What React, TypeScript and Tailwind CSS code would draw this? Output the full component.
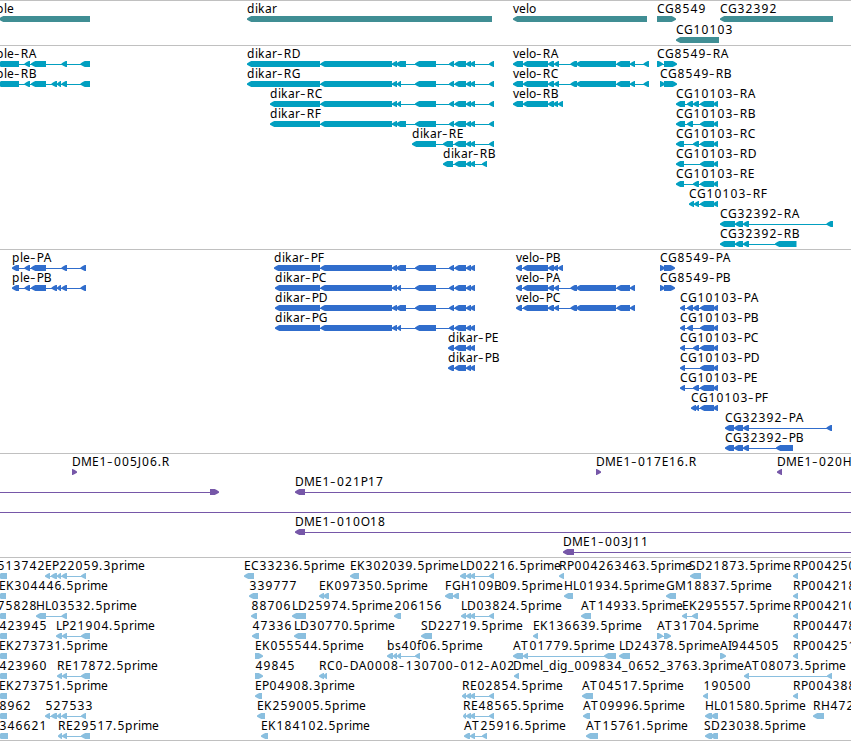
import React from 'react';

type Span = [number, number];

interface Feature {
  x: number;
  label?: string;
  spans: Span[];
  dir?: 'left' | 'right';
  // overrides for the connecting line when it runs past the spans
  line?: Span;
}

interface TrackData {
  name: string;
  color: string;
  rowClass: string;
  padClass: string;
  rows: Feature[][];
}

// pixel advance of every glyph used in the labels
const ADVANCE: Record<string, number> = {
  A: 8, B: 7, C: 8, D: 9, E: 7, F: 7, G: 9, H: 9, I: 3, J: 4, K: 8, L: 6, M: 11, O: 9, P: 7, R: 8, S: 7, T: 8,
  a: 7, b: 8, d: 8, e: 7, f: 4, g: 8, i: 3, k: 7, l: 3, m: 11, o: 7, p: 8, r: 5, s: 6, v: 6,
  '-': 6.7, '.': 4, _: 6,
};

const glyphPositions = (label: string) => {
  let x = 0;
  return label.split('').map((ch) => {
    const at = x;
    x += ADVANCE[ch] ?? 8;
    return /[0-9]/.test(ch) ? at + 0.4 : at;
  });
};

const f = (x: number, label: string, spans: Span[], dir: 'left' | 'right' = 'left'): Feature => ({ x, label, spans, dir });

const DIKAR_END: Span[] = [[454.5, 466], [466, 471], [470, 475]];
const DIKAR_TAIL: Span[] = [[415, 436], [449, 454], ...DIKAR_END];
const DIKAR_LONG: Span[] = [[320.5, 392], [392, 397], [396, 406], ...DIKAR_TAIL];
const DIKAR_SHORT: Span[] = [[320.5, 392], [392, 397], [397, 401], ...DIKAR_TAIL];
const VELO_MID: Span[] = [[523, 548], [548, 554], [554, 559], [570.5, 577], [576, 616], [616.5, 630], [630, 635]];
const VELO_B: Span[] = [[523, 548], [548, 554], [553, 558], [558, 563]];
const CG_END: Span[] = [[700, 714], [713, 718]];
const EST_PLE: Span[] = [[45, 50], [51, 57], [57, 61], [61.5, 67], [81, 86]];
const estDikar = (x: number): Span[] => [[x, 466], [466, 471], [470, 475], [489, 494]];

const TRACKS: TrackData[] = [
  {
    name: 'genes',
    color: '#408e94',
    rowClass: 'relative h-[21px]',
    padClass: 'pb-0',
    rows: [
      [
        f(-4, 'ple', [[-1, 90]]),
        f(247, 'dikar', [[247, 492]]),
        f(513, 'velo', [[513, 647]]),
        f(657, 'CG8549', [[657, 676]], 'right'),
        f(720, 'CG32392', [[720, 833]]),
      ],
      [f(676, 'CG10103', [[676, 719]])],
    ],
  },
  {
    name: 'transcripts',
    color: '#029fc0',
    rowClass: 'relative h-5',
    padClass: 'pb-px',
    rows: [
      [
        f(-4, 'ple-RA', [[-3, 19], [24.5, 30], [31, 46], [61.5, 67], [80.5, 90]]),
        f(247, 'dikar-RD', [[247, 320], ...DIKAR_LONG, [489, 494]]),
        f(513, 'velo-RA', [[513, 523], ...VELO_MID, [643.5, 649]]),
        f(657, 'CG8549-RA', [[657, 663], [664, 677]], 'right'),
      ],
      [
        f(-4, 'ple-RB', [[-3, 19], [24.5, 30], [31, 46], [51.5, 57], [57, 61], [61.5, 67], [80.5, 90]]),
        f(247, 'dikar-RG', [[247, 320], ...DIKAR_SHORT, [489, 494]]),
        f(513, 'velo-RC', [[513, 523], ...VELO_MID, [643.5, 649]]),
        f(660, 'CG8549-RB', [[660, 665], [664, 677]], 'right'),
      ],
      [
        f(270, 'dikar-RC', [[270, 320], ...DIKAR_SHORT, [489, 494]]),
        f(513, 'velo-RB', [[513, 523], ...VELO_B]),
        f(676, 'CG10103-RA', [[676, 685], [687, 693], [693, 699], ...CG_END]),
      ],
      [
        f(270, 'dikar-RF', [[270, 320], ...DIKAR_LONG, [489, 494]]),
        f(676, 'CG10103-RB', [[676, 685], [687, 693], ...CG_END]),
      ],
      [
        f(412, 'dikar-RE', [[412, 436], [443, 453], ...DIKAR_END, [489, 494]]),
        f(676, 'CG10103-RC', [[676, 684], [693, 699], ...CG_END]),
      ],
      [
        f(443, 'dikar-RB', [[443, 453], ...DIKAR_END, [482, 487]]),
        f(676, 'CG10103-RD', [[676, 684], ...CG_END]),
      ],
      [f(676, 'CG10103-RE', [[676, 684], [693, 699], ...CG_END])],
      [f(689, 'CG10103-RF', [[689, 694], [694, 699], ...CG_END])],
      [f(720, 'CG32392-RA', [[720, 735], [735, 743], [743, 749], [826.5, 833]])],
      [f(720, 'CG32392-RB', [[720, 735], [735, 743], [743, 749], [775, 796.5]])],
    ],
  },
  {
    name: 'proteins',
    color: '#306dcc',
    rowClass: 'relative h-5',
    padClass: 'pb-px',
    rows: [
      [
        f(12, 'ple-PA', [[12, 19], [24.5, 30], [31, 46], [61.5, 67], [80.5, 86]]),
        f(274, 'dikar-PF', [[274, 320], ...DIKAR_LONG]),
        f(516, 'velo-PB', [[516, 522], ...VELO_B]),
        f(660, 'CG8549-PA', [[660, 665], [664, 675]], 'right'),
      ],
      [
        f(12, 'ple-PB', [[12, 19], [24.5, 30], [31, 46], [51.5, 57], [57, 61], [61.5, 67], [80.5, 86]]),
        f(275, 'dikar-PC', [[275, 320], ...DIKAR_SHORT]),
        f(516, 'velo-PA', [[516, 522], ...VELO_MID]),
        f(660, 'CG8549-PB', [[660, 665], [664, 675]], 'right'),
      ],
      [
        f(275, 'dikar-PD', [[275, 320], ...DIKAR_LONG]),
        f(516, 'velo-PC', [[516, 522], ...VELO_MID]),
        f(680, 'CG10103-PA', [[680, 685], [687, 693], [693, 699], ...CG_END]),
      ],
      [
        f(275, 'dikar-PG', [[275, 320], ...DIKAR_SHORT]),
        f(680, 'CG10103-PB', [[680, 685], [687, 693], ...CG_END]),
      ],
      [
        f(448, 'dikar-PE', [[448, 454], ...DIKAR_END]),
        f(680, 'CG10103-PC', [[680, 685], [693, 699], ...CG_END]),
      ],
      [
        f(448, 'dikar-PB', [[448, 454], ...DIKAR_END]),
        f(680, 'CG10103-PD', [[680, 685], ...CG_END]),
      ],
      [f(680, 'CG10103-PE', [[680, 685], [693, 699], ...CG_END])],
      [f(691, 'CG10103-PF', [[691, 696], [695, 699], ...CG_END])],
      [f(725, 'CG32392-PA', [[725, 734], [734, 743], [743, 749], [826.5, 832]])],
      [f(725, 'CG32392-PB', [[725, 734], [734, 743], [743, 749], [776, 793]])],
    ],
  },
  {
    name: 'bacs',
    color: '#7657a8',
    rowClass: 'relative h-5',
    padClass: 'pb-px',
    rows: [
      [
        f(72, 'DME1-005J06.R', [[72, 77]], 'right'),
        f(596, 'DME1-017E16.R', [[596, 601]], 'right'),
        f(777, 'DME1-020H', [[777, 782]]),
      ],
      [
        { x: 0, spans: [[210, 219]], dir: 'right', line: [0, 215] },
        { x: 295, label: 'DME1-021P17', spans: [[295, 305]], line: [300, 851] },
      ],
      [{ x: 0, spans: [], line: [0, 851] }],
      [{ x: 295, label: 'DME1-010O18', spans: [[295, 305]], line: [300, 851] }],
      [{ x: 563, label: 'DME1-003J11', spans: [[563, 574]], line: [568, 851] }],
    ],
  },
  {
    name: 'ests',
    color: '#8abfdf',
    rowClass: 'relative h-5',
    padClass: 'pb-0',
    rows: [
      [
        f(-3, '513742', [[-3, 7]]),
        f(45, 'EP22059.3prime', EST_PLE),
        f(244, 'EC33236.5prime', [[244, 254]]),
        f(350, 'EK302039.5prime', [[350, 359]]),
        f(460, 'LD02216.5prime', estDikar(460)),
        f(559, 'RP004263463.5prime', [[559, 564]]),
        f(689, 'SD21873.5prime', [[690, 701]]),
        f(793, 'RP004250', [[793, 798]]),
      ],
      [
        f(-1, 'EK304446.5prime', [[-3, 6]]),
        f(249, '339777', [[249, 258]]),
        f(319, 'EK097350.5prime', [[319, 324], [323, 329]]),
        f(445, 'FGH109B09.5prime', [[445, 453], [453, 459]]),
        f(564, 'HL01934.5prime', [[564, 573]]),
        f(666, 'GM18837.5prime', [[666, 676]]),
        f(793, 'RP004218', [[793, 798]]),
      ],
      [
        f(-3, '75828', [[-3, 6]]),
        f(36, 'HL03532.5prime', [[36, 46], [61.5, 67]]),
        f(251, '88706', [[251, 257]]),
        f(292, 'LD25974.5prime', [[292, 306]]),
        f(394, '206156', [[394, 401]]),
        f(461, 'LD03824.5prime', estDikar(461)),
        f(581, 'AT14933.5prime', [[581, 591]]),
        f(682, 'EK295557.5prime', [[682, 687], [692, 698]]),
        f(793, 'RP004210', [[793, 798]]),
      ],
      [
        f(-1, '423945', [[-3, 7]]),
        f(56, 'LP21904.5prime', [[56, 62], [62, 67], [81, 90]]),
        f(252, '47336', [[252, 259]]),
        f(294, 'LD30770.5prime', [[294, 306]]),
        f(421, 'SD22719.5prime', [[421, 432]]),
        f(533, 'EK136639.5prime', [[533, 538]]),
        f(657, 'AT31704.5prime', [[657, 663], [664, 671]], 'right'),
        f(793, 'RP004478', [[793, 798]]),
      ],
      [
        f(-1, 'EK273731.5prime', [[-3, 7]]),
        f(255, 'EK055544.5prime', [[255, 263]], 'right'),
        f(387, 'bs40f06.5prime', [[387, 393], [393, 397], [397, 401], [415, 420]]),
        f(513, 'AT01779.5prime', [[513, 523], [523, 528], [604, 616]]),
        f(619, 'LD24378.5prime', [[619, 630]]),
        f(720, 'AI944505', [[720, 726]], 'right'),
        f(793, 'RP004251', [[793, 798]]),
      ],
      [
        f(-1, '423960', [[-3, 7]]),
        f(57, 'RE17872.5prime', [[57, 62], [62, 67], [81, 90]]),
        f(255, '49845', [[255, 263]], 'right'),
        f(319, 'RC0-DA0008-130700-012-A02', [[319, 324], [323, 327]]),
        f(513, 'Dmel_dig_009834_0652_3763.3prime', [[514, 519]]),
        f(744, 'AT08073.5prime', [[744, 749], [827, 832]]),
      ],
      [
        f(-1, 'EK273751.5prime', [[-3, 7]]),
        f(255, 'EP04908.3prime', [[255, 262]]),
        f(462, 'RE02854.5prime', estDikar(462)),
        f(582, 'AT04517.5prime', [[582, 593]]),
        f(703, '190500', [[703, 708]]),
        f(793, 'RP004388', [[793, 798]]),
      ],
      [
        f(-1, '8962', [[-3, 7]]),
        f(45, '527533', EST_PLE),
        f(257, 'EK259005.5prime', [[257, 265]]),
        f(463, 'RE48565.5prime', estDikar(463)),
        f(583, 'AT09996.5prime', [[583, 590]]),
        f(705, 'HL01580.5prime', [[705, 712], [711, 718]]),
        f(813, 'RH472', [[813, 824]]),
      ],
      [
        f(-1, '346621', [[-3, 8]]),
        f(58, 'RE29517.5prime', [[58, 62], [62, 67], [81, 90]]),
        f(261, 'EK184102.5prime', [[261, 268]]),
        f(464, 'AT25916.5prime', [[464, 470], [470, 475], [482, 487]]),
        f(586, 'AT15761.5prime', [[586, 598]]),
        f(704, 'SD23038.5prime', [[705, 712], [710, 718]]),
      ],
    ],
  },
];

// bar with a rounded-off tip, 6px tall
const arrowPoints = ([start, end]: Span, dir: 'left' | 'right') => {
  const tip = Math.min(5, end - start);
  const at = (d: number) => (dir === 'left' ? start + d : end - d);
  const back = dir === 'left' ? end : start;
  return [
    [at(0), 15.5],
    [at(tip * 0.45), 14],
    [at(tip * 0.85), 13],
    [back, 13],
    [back, 19],
    [at(tip * 0.85), 19],
    [at(tip * 0.45), 18],
    [at(0), 16.7],
  ].map((p) => p.join(',')).join(' ');
};

const FeatureGlyph: React.FC<{ feature: Feature; color: string }> = ({ feature, color }) => {
  const { x, label, spans, dir = 'left' } = feature;
  const line: Span | null = feature.line ?? (spans.length > 1 ? [spans[0][0] + 2, spans[spans.length - 1][1] - 1] : null);
  return (
    <svg className="absolute top-0 h-5 w-px overflow-visible" style={{ left: x }}>
      {line && <rect x={line[0] - x} y={16} width={line[1] - line[0]} height={1} fill={color} />}
      {spans.map((s, i) => (
        <polygon key={i} points={arrowPoints([s[0] - x, s[1] - x], dir)} fill={color} />
      ))}
      {label && (
        <text
          x={glyphPositions(label).join(' ')}
          y={label.split('').map((ch) => (ch === '-' ? 11 : 10)).join(' ')}
          className="fill-black text-[12px]"
        >
          {label.split(/(-)/).map((part, i) => (
            <tspan key={i} className={part === '-' ? 'text-[17px] font-light' : ''}>{part}</tspan>
          ))}
        </text>
      )}
    </svg>
  );
};

const Track: React.FC<{ track: TrackData }> = ({ track }) => (
  <section className={`border-t border-[#c0c0c0] pt-0.5 ${track.padClass}`}>
    {track.rows.map((row, i) => (
      <div key={i} className={track.rowClass}>
        {row.map((feature, j) => (
          <FeatureGlyph key={j} feature={feature} color={track.color} />
        ))}
      </div>
    ))}
  </section>
);

const App: React.FC = () => (
  <main className="h-[741px] w-[851px] overflow-hidden bg-white font-['Noto_Sans',sans-serif]">
    {TRACKS.map((track) => (
      <Track key={track.name} track={track} />
    ))}
    <div className="border-t border-[#c0c0c0]" />
  </main>
);

export default App;
